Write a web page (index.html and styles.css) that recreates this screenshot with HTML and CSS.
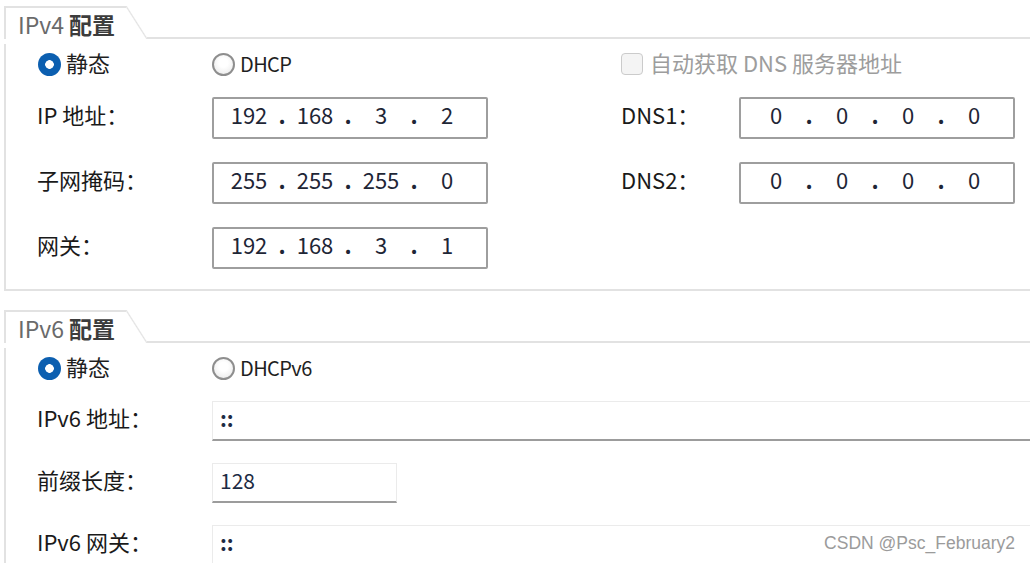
FILE: index.html
```html
<!DOCTYPE html>
<html>
<head>
    <meta charset="UTF-8">
    <title>网络配置</title>
    <link rel="stylesheet" href="styles.css">
</head>
<body>
    <div class="page">
        <!-- IPv4 settings -->
        <div class="group">
            <div class="group-head">
                <div class="tab"><span class="tab-en">IPv4</span><b>配置</b></div>
                <div class="tab-slant"></div>
                <div class="tab-rest"></div>
            </div>
            <div class="group-body">
                <div class="options v4-grid">
                    <label class="opt"><span class="radio checked"></span>静态</label>
                    <label class="opt"><span class="radio"></span><span class="en">DHCP</span></label>
                    <label class="opt opt-auto"><span class="checkbox"></span>自动获取 DNS 服务器地址</label>
                </div>
                <div class="fields v4-grid">
                    <div class="label">IP 地址：</div>
                    <div class="ip-box"><span>192</span><i>.</i><span>168</span><i>.</i><span>3</span><i>.</i><span>2</span></div>
                    <div class="label dns-label">DNS1：</div>
                    <div class="ip-box"><span>0</span><i>.</i><span>0</span><i>.</i><span>0</span><i>.</i><span>0</span></div>

                    <div class="label">子网掩码：</div>
                    <div class="ip-box"><span>255</span><i>.</i><span>255</span><i>.</i><span>255</span><i>.</i><span>0</span></div>
                    <div class="label dns-label">DNS2：</div>
                    <div class="ip-box"><span>0</span><i>.</i><span>0</span><i>.</i><span>0</span><i>.</i><span>0</span></div>

                    <div class="label">网关：</div>
                    <div class="ip-box"><span>192</span><i>.</i><span>168</span><i>.</i><span>3</span><i>.</i><span>1</span></div>
                </div>
            </div>
        </div>

        <!-- IPv6 settings -->
        <div class="group group-v6">
            <div class="group-head">
                <div class="tab"><span class="tab-en">IPv6</span><b>配置</b></div>
                <div class="tab-slant"></div>
                <div class="tab-rest"></div>
            </div>
            <div class="group-body">
                <div class="options v6-grid">
                    <label class="opt"><span class="radio checked"></span>静态</label>
                    <label class="opt"><span class="radio"></span><span class="en">DHCPv6</span></label>
                </div>
                <div class="fields v6-grid">
                    <div class="label">IPv6 地址：</div>
                    <div class="v6-box"><b>::</b></div>

                    <div class="label">前缀长度：</div>
                    <div class="v6-box short">128</div>

                    <div class="label">IPv6 网关：</div>
                    <div class="v6-box"><b>::</b></div>
                </div>
            </div>
        </div>

        <div class="watermark">CSDN @Psc_February2</div>
    </div>
</body>
</html>
```

FILE: styles.css
```css
body {
    margin: 0;
    background-color: #fff;
    font-family: "Noto Sans CJK SC", "Liberation Sans", sans-serif;
    color: #1f1f1f;
    overflow: hidden;
}
.page {
    position: relative;
    width: 1030px;
    height: 563px;
    overflow: hidden;
    padding-top: 6px;
    box-sizing: border-box;
}
.group {
    width: 1040px;
    margin-left: 4px;
}
.group-v6 {
    margin-top: 19px;
}
.group-head {
    display: flex;
    height: 33px;
}
.tab {
    width: 122px;
    border-top: 2px solid #e2e2e2;
    border-left: 2px solid #e2e2e2;
    padding: 5px 0 0 12px;
    box-sizing: border-box;
    font-size: 23px;
    line-height: 23px;
    white-space: nowrap;
}
.tab-en {
    color: #6a6a6a;
    margin-right: 5px;
}
.tab b {
    color: #3c3c3c;
    font-weight: 700;
}
.tab-slant {
    width: 21px;
    background: linear-gradient(to top right, transparent calc(50% - 1.2px), #e2e2e2 50%, transparent calc(50% + 1.2px));
}
.tab-rest {
    flex: 1;
    border-bottom: 2px solid #e2e2e2;
}
.group-body {
    border-left: 2px solid #e2e2e2;
    border-bottom: 2px solid #e2e2e2;
    padding: 0 0 20px 31px;
}
.v4-grid {
    display: grid;
    grid-template-columns: 175px 276px 133px 118px 276px;
}
.v6-grid {
    display: grid;
    grid-template-columns: 175px 1fr;
}
.options {
    height: 40px;
    margin-top: 5px;
    align-items: center;
}
.opt {
    display: flex;
    align-items: center;
    gap: 5px;
    padding-bottom: 4px;
    font-size: 22px;
    line-height: 22px;
    color: #1f1f1f;
}
.opt .en {
    padding-top: 3px;
    font-size: 20px;
    letter-spacing: -0.6px;
}
.opt-auto {
    grid-column: 4 / span 2;
    gap: 7px;
    color: #9d9d9d;
}
.radio {
    width: 23px;
    height: 23px;
    margin-top: 4px;
    border-radius: 50%;
    box-sizing: border-box;
    border: 2px solid #8e8e8e;
    background: radial-gradient(circle at 50% 40%, #fff 30%, #e6e6e6 100%);
}
.radio.checked {
    margin-left: 1px;
    border: none;
    background: radial-gradient(circle, #fff 0 4px, #0c5fb0 4.6px);
}
.checkbox {
    width: 22px;
    height: 22px;
    margin-top: 4px;
    box-sizing: border-box;
    border: 1.5px solid #cbcbcb;
    border-radius: 4px;
    background-color: #f4f4f4;
}
.fields {
    margin-top: 13px;
    row-gap: 23px;
    grid-auto-rows: 42px;
}
.v6-grid.fields {
    row-gap: 22px;
    grid-auto-rows: 40px;
}
.label {
    display: flex;
    align-items: center;
    padding-bottom: 9px;
    font-size: 22px;
    line-height: 22px;
    color: #1a1a1a;
}
.dns-label {
    grid-column: 4;
}
.ip-box {
    display: flex;
    align-items: center;
    border: 2px solid #9e9e9e;
    border-radius: 2px;
    padding: 0 0 8px 9px;
    font-size: 22px;
    line-height: 22px;
    color: #1e2636;
}
.ip-box span {
    width: 52px;
    text-align: center;
}
.ip-box i {
    width: 14px;
    text-align: center;
    font-style: normal;
    font-weight: 700;
}
.v6-box {
    display: flex;
    align-items: center;
    border: 1px solid #ebebeb;
    border-bottom: 2px solid #9c9c9c;
    padding: 0 0 5px 7px;
    font-size: 21px;
    line-height: 21px;
    color: #1d2b44;
}
.v6-box b {
    font-weight: 700;
}
.v6-box.short {
    width: 185px;
    box-sizing: border-box;
    justify-self: start;
}
.watermark {
    position: absolute;
    right: 15px;
    top: 532px;
    font-family: "Liberation Sans", Arial, sans-serif;
    font-size: 17.5px;
    line-height: 22px;
    color: #9b9b9b;
}
```
